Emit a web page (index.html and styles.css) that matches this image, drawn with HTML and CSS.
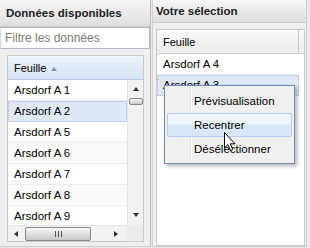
FILE: index.html
```html
<!DOCTYPE html>
<html>
<head>
<meta charset="utf-8">
<link rel="stylesheet" href="styles.css">
</head>
<body>
<div class="app">
  <section class="panel left">
    <div class="phead">Données disponibles</div>
    <div class="filter">Filtre les données</div>
    <div class="pbody">
      <div class="grid">
        <div class="ghead sorted"><span>Feuille</span><span class="sort"></span></div>
        <div class="gmain">
          <div class="rows">
            <div class="row">Arsdorf A 1</div>
            <div class="row sel">Arsdorf A 2</div>
            <div class="row">Arsdorf A 5</div>
            <div class="row alt">Arsdorf A 6</div>
            <div class="row">Arsdorf A 7</div>
            <div class="row alt">Arsdorf A 8</div>
            <div class="row">Arsdorf A 9</div>
          </div>
          <div class="vscroll">
            <span class="arr up"></span>
            <span class="vthumb"></span>
            <span class="vspace"></span>
            <span class="arr down"></span>
          </div>
        </div>
        <div class="hrow">
          <div class="hscroll">
            <span class="arr lft"></span>
            <span class="hthumb"><span class="grip"></span></span>
            <span class="hspace"></span>
            <span class="arr rgt"></span>
          </div>
          <div class="corner"></div>
        </div>
      </div>
    </div>
  </section>
  <section class="panel right">
    <div class="phead small">Votre sélection</div>
    <div class="pbody rb">
      <div class="grid rgrid">
        <div class="ghead plain"><span class="col">Feuille</span><span class="filler"></span></div>
        <div class="rrows">
          <div class="row">Arsdorf A 4</div>
          <div class="row sel">Arsdorf A 3</div>
        </div>
      </div>
    </div>
  </section>
  <div class="menu">
    <div class="mitem">Prévisualisation</div>
    <div class="mitem active">Recentrer</div>
    <div class="mitem">Désélectionner</div>
  </div>
  <svg class="cursor" width="13" height="20" viewBox="0 0 13 20">
    <path d="M0.5 0.5 L0.5 16 L4 12.6 L6.6 18.6 L8.8 17.6 L6.3 11.8 L11 11.8 Z" fill="#fff" stroke="#000" stroke-width="1" stroke-linejoin="miter"/>
  </svg>
</div>
</body>
</html>
```
FILE: styles.css
```css
* { box-sizing: border-box; }
body {
  margin: 0;
  font-family: "Liberation Sans", Arial, sans-serif;
  font-size: 11px;
  color: #000;
}
.app {
  position: relative;
  display: flex;
  gap: 1px;
  width: 310px;
  height: 248px;
  background: #e9e9e9;
}
.panel {
  display: flex;
  flex-direction: column;
  height: 247px;
  background: #efefef;
  border-bottom: 1px solid #cfcfcf;
}
.left {
  width: 151px;
  border-right: 1px solid #bdbdbd;
}
.right {
  width: 155px;
  border-left: 1px solid #d2d2d2;
  border-right: 1px solid #cdcdcd;
}
.phead {
  height: 27px;
  padding-left: 6px;
  display: flex;
  align-items: center;
  font-weight: bold;
  font-size: 11.5px;
  color: #222;
  background: linear-gradient(#f6f6f6, #dedede);
  border-bottom: 1px solid #cacaca;
}
.phead.small {
  height: 23px;
  padding-left: 3px;
}
.filter {
  height: 22px;
  padding-left: 4px;
  display: flex;
  align-items: center;
  font-size: 12px;
  color: #7a7a7a;
  background: #fff;
  border: 1px solid #b5b8c8;
  border-left-color: #d8d8d8;
}
.pbody {
  flex: 1;
  padding: 6px 6px 4px 7px;
}
.pbody.rb {
  padding: 6px 1px 0 3px;
}
.grid {
  display: flex;
  flex-direction: column;
  height: 187px;
  border: 1px solid #c9c9c9;
  background: #fff;
}
.rgrid {
  height: 217px;
}
.ghead {
  height: 24px;
  flex: none;
  display: flex;
  align-items: center;
  padding-left: 6px;
  gap: 5px;
}
.ghead.sorted {
  background: linear-gradient(#ebf2fb, #d6e3f5);
  border-bottom: 1px solid #b9cbe6;
  border-top: 1px solid #f4f8fd;
}
.sort {
  width: 0;
  height: 0;
  border-left: 3.5px solid transparent;
  border-right: 3.5px solid transparent;
  border-bottom: 4px solid #7a95c4;
  margin-top: 1px;
}
.ghead.plain {
  padding-left: 0;
  gap: 0;
  height: 24px;
  background: linear-gradient(#f9f9f9, #ececec);
  border-bottom: 1px solid #d0d0d0;
}
.ghead.plain .col {
  flex: 1;
  height: 100%;
  display: flex;
  align-items: center;
  padding-left: 6px;
  border-right: 1px solid #c9c9c9;
}
.ghead.plain .filler {
  width: 5px;
  height: 100%;
}
.gmain {
  display: flex;
  height: 145px;
  overflow: hidden;
}
.rows {
  flex: 1;
  overflow: hidden;
}
.row {
  height: 21px;
  padding-left: 6px;
  line-height: 20px;
  font-size: 11.5px;
  border-bottom: 1px solid #ededed;
  white-space: nowrap;
}
.row.alt {
  background: #fafafa;
}
.row.sel {
  background: #dfe8f6;
  border: 1px dotted #a3bae9;
  line-height: 19px;
  padding-left: 5px;
}
.rrows {
  width: 142px;
}
.vscroll {
  width: 16px;
  display: flex;
  flex-direction: column;
  align-items: center;
  background: #f2f2f2;
  border-left: 1px solid #e4e4e4;
}
.arr {
  width: 0;
  height: 0;
  flex: none;
}
.arr.up {
  margin-top: 7px;
  border-left: 3.5px solid transparent;
  border-right: 3.5px solid transparent;
  border-bottom: 4px solid #333;
}
.arr.down {
  margin-bottom: 8px;
  border-left: 3.5px solid transparent;
  border-right: 3.5px solid transparent;
  border-top: 4px solid #333;
}
.vthumb {
  width: 14px;
  height: 7px;
  margin-top: 7px;
  border: 1px solid #8a8a8a;
  border-radius: 2px;
  background: linear-gradient(#f4f4f4, #c9c9c9);
}
.vspace { flex: 1; }
.hrow {
  display: flex;
  height: 16px;
  flex: none;
}
.hscroll {
  flex: 1;
  display: flex;
  align-items: center;
  padding: 0 9px 0 6px;
  background: #f2f2f2;
  border-top: 1px solid #e4e4e4;
}
.arr.lft {
  border-top: 3.5px solid transparent;
  border-bottom: 3.5px solid transparent;
  border-right: 4px solid #333;
}
.arr.rgt {
  border-top: 3.5px solid transparent;
  border-bottom: 3.5px solid transparent;
  border-left: 4px solid #333;
}
.hthumb {
  width: 66px;
  height: 14px;
  margin-left: 7px;
  display: flex;
  align-items: center;
  justify-content: center;
  border: 1px solid #8a8a8a;
  border-radius: 2px;
  background: linear-gradient(#f7f7f7, #c8c8c8);
}
.grip {
  width: 7px;
  height: 6px;
  background: repeating-linear-gradient(90deg, #555 0 1px, transparent 1px 3px);
}
.hspace { flex: 1; }
.corner {
  width: 16px;
  background: #ececec;
}
.menu {
  position: absolute;
  left: 164px;
  top: 85px;
  width: 131px;
  height: 79px;
  padding: 3px 2px;
  border: 1px solid #718bb7;
  background: linear-gradient(90deg, #f0f0f0 0 25px, #e2e3e3 25px 26px, #fff 26px 27px, #f0f0f0 27px);
  box-shadow: 2px 2px 4px rgba(0, 0, 0, 0.3);
}
.mitem {
  height: 24px;
  padding-left: 27px;
  line-height: 24px;
  font-size: 11.5px;
  color: #000;
  white-space: nowrap;
}
.mitem.active {
  line-height: 22px;
  padding-left: 26px;
  border: 1px solid #aecff7;
  border-radius: 2px;
  background: linear-gradient(#eef5fd 0 45%, #dbe8f8 50%, #d8e6f8);
}
.cursor {
  position: absolute;
  left: 224px;
  top: 132px;
}
```
